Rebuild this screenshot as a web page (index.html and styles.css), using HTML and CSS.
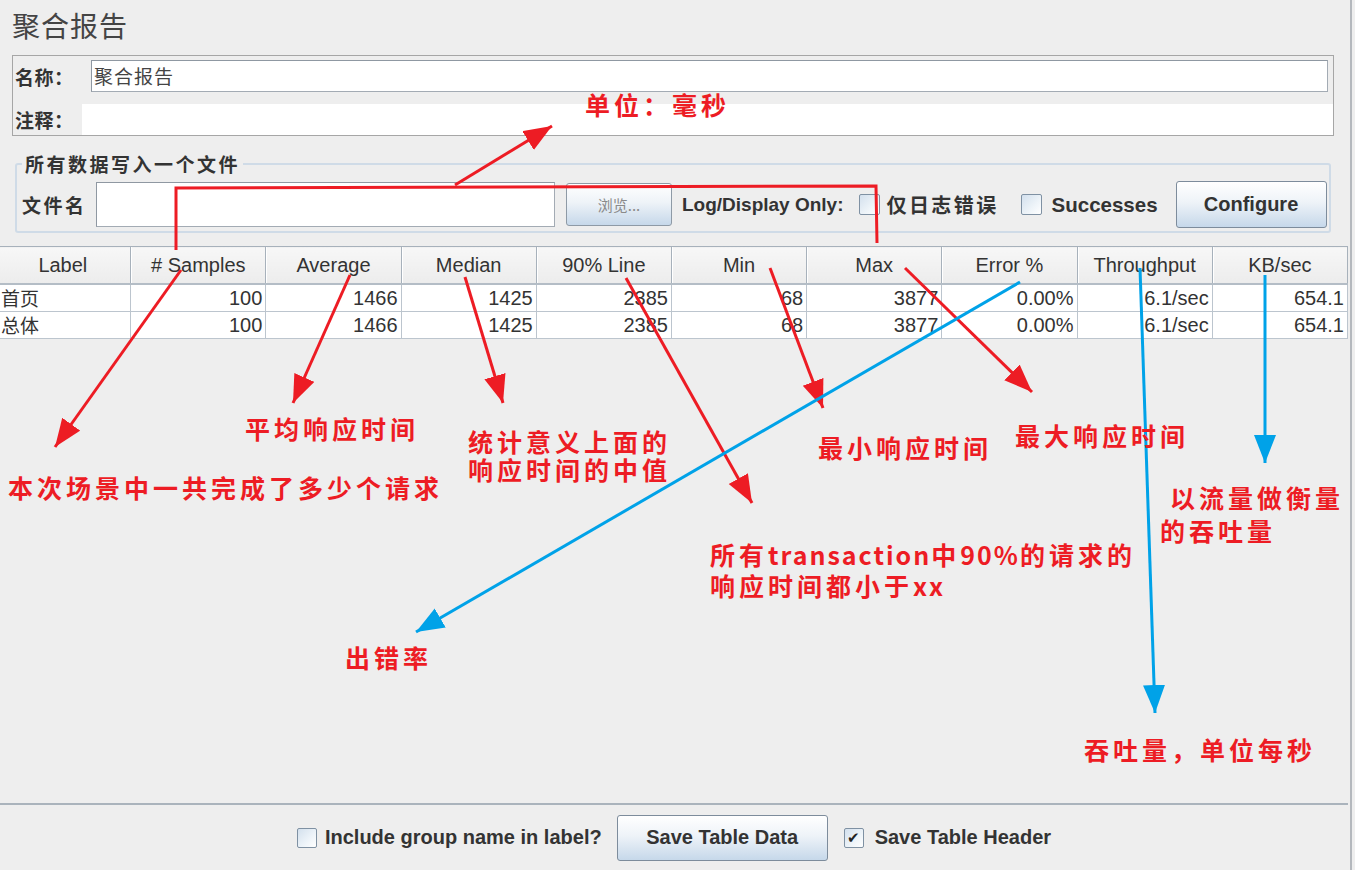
FILE: index.html
```html
<!DOCTYPE html>
<html lang="zh-CN">
<head>
<meta charset="utf-8">
<title>聚合报告</title>
<link rel="stylesheet" href="styles.css">
</head>
<body>
<div class="window">
  <h1 class="title">聚合报告</h1>

  <div class="namebox">
    <div class="name-row">
      <span class="lbl name-lbl">名称：</span>
      <div class="name-input">聚合报告</div>
    </div>
    <div class="comment-row">
      <span class="lbl comment-lbl">注释：</span>
      <div class="comment-area"></div>
    </div>
  </div>

  <fieldset class="group">
    <legend class="group-title">所有数据写入一个文件</legend>
    <div class="file-row">
      <span class="file-lbl">文件名</span>
      <div class="file-input"></div>
      <button class="btn browse">浏览...</button>
      <span class="opt log-opt">Log/Display Only:</span>
      <span class="cb cb-err"></span>
      <span class="opt cjk-opt">仅日志错误</span>
      <span class="cb cb-succ"></span>
      <span class="opt succ-opt">Successes</span>
      <button class="btn configure">Configure</button>
    </div>
  </fieldset>

  <div class="results">
    <table class="grid">
      <thead>
        <tr>
          <th>Label</th><th># Samples</th><th>Average</th><th>Median</th><th>90% Line</th>
          <th>Min</th><th>Max</th><th>Error %</th><th>Throughput</th><th>KB/sec</th>
        </tr>
      </thead>
      <tbody>
        <tr>
          <td class="lab">首页</td><td>100</td><td>1466</td><td>1425</td><td>2385</td>
          <td>68</td><td>3877</td><td>0.00%</td><td>6.1/sec</td><td>654.1</td>
        </tr>
        <tr>
          <td class="lab">总体</td><td>100</td><td>1466</td><td>1425</td><td>2385</td>
          <td>68</td><td>3877</td><td>0.00%</td><td>6.1/sec</td><td>654.1</td>
        </tr>
      </tbody>
    </table>
  </div>

  <div class="bottom">
    <span class="cb cb-small"></span>
    <span class="opt group-opt">Include group name in label?</span>
    <button class="btn save-data">Save Table Data</button>
    <span class="cb cb-small checked">&#10004;</span>
    <span class="opt header-opt">Save Table Header</span>
  </div>
</div>

<svg class="overlay" width="1355" height="870" viewBox="0 0 1355 870" xmlns="http://www.w3.org/2000/svg">
  <defs>
    <marker id="hr" markerUnits="userSpaceOnUse" markerWidth="30" markerHeight="24" refX="28" refY="11" orient="auto">
      <path d="M0,0 L28,11 L0,22 Z" fill="#ed1c24"/>
    </marker>
    <marker id="hb" markerUnits="userSpaceOnUse" markerWidth="30" markerHeight="24" refX="28" refY="11" orient="auto">
      <path d="M0,0 L28,11 L0,22 Z" fill="#00a2e8"/>
    </marker>
  </defs>
  <g fill="none" stroke="#ed1c24" stroke-width="3">
    <polyline points="176,250 176,188 876,186 877,243"/>
    <line x1="455" y1="185" x2="552" y2="126" marker-end="url(#hr)"/>
    <line x1="181" y1="270" x2="55" y2="447" marker-end="url(#hr)"/>
    <line x1="350" y1="275" x2="293" y2="403" marker-end="url(#hr)"/>
    <line x1="465" y1="277" x2="503" y2="403" marker-end="url(#hr)"/>
    <line x1="626" y1="278" x2="752" y2="503" marker-end="url(#hr)"/>
    <line x1="770" y1="268" x2="823" y2="408" marker-end="url(#hr)"/>
    <line x1="905" y1="268" x2="1032" y2="392" marker-end="url(#hr)"/>
  </g>
  <g fill="none" stroke="#00a2e8" stroke-width="3">
    <line x1="1020" y1="282" x2="416" y2="632" marker-end="url(#hb)"/>
    <line x1="1140" y1="268" x2="1155" y2="713" marker-end="url(#hb)"/>
    <line x1="1265" y1="275" x2="1265" y2="463" marker-end="url(#hb)"/>
  </g>
</svg>

<div class="note n-unit">单位：毫秒</div>
<div class="note n-samples">本次场景中一共完成了多少个请求</div>
<div class="note n-avg">平均响应时间</div>
<div class="note n-median">统计意义上面的<br>响应时间的中值</div>
<div class="note n-min">最小响应时间</div>
<div class="note n-max">最大响应时间</div>
<div class="note n-90">所有<span class="lat">transaction</span>中<span class="lat">90%</span>的请求的<br>响应时间都小于<span class="lat">xx</span></div>
<div class="note n-kb"><span class="indent">以流量做衡量</span><br>的吞吐量</div>
<div class="note n-err">出错率</div>
<div class="note n-tp">吞吐量，单位每秒</div>
</body>
</html>
```

FILE: styles.css
```css
html, body {
  margin: 0;
  padding: 0;
}

body {
  width: 1355px;
  height: 870px;
  overflow: hidden;
  position: relative;
  background: #eeeeee;
  color: #333333;
  font-family: "Liberation Sans", "Noto Sans CJK SC", sans-serif;
}

.window {
  width: 1352px;
  height: 870px;
  box-sizing: border-box;
  border-right: 2px solid #b4b8bd;
  display: flex;
  flex-direction: column;
}

/* ---------- title ---------- */
.title {
  margin: 0 0 13px 0;
  padding: 9px 0 0 12px;
  font-family: "Noto Sans CJK SC", sans-serif;
  font-weight: 400;
  font-size: 28px;
  line-height: 33px;
  letter-spacing: 1px;
  color: #444444;
}

/* ---------- name / comment ---------- */
.namebox {
  margin-left: 12px;
  width: 1322px;
  height: 81px;
  box-sizing: border-box;
  border: 1px solid #a6a6a6;
  display: flex;
  flex-direction: column;
}

.lbl {
  font-family: "Noto Sans CJK SC", sans-serif;
  font-weight: 700;
  font-size: 19px;
  letter-spacing: 0.5px;
  color: #333333;
  padding-left: 2px;
  box-sizing: border-box;
  white-space: nowrap;
}

.name-row {
  height: 48px;
  display: flex;
  align-items: flex-start;
}

.name-lbl {
  width: 78px;
  line-height: 32px;
  margin-top: 5px;
}

.name-input {
  margin-top: 4px;
  width: 1237px;
  height: 32px;
  box-sizing: border-box;
  border: 1px solid #a3abb4;
  border-top-color: #8f98a2;
  border-left-color: #8f98a2;
  background: #ffffff;
  padding-left: 2px;
  font-family: "Noto Sans CJK SC", sans-serif;
  font-size: 19px;
  line-height: 29px;
  letter-spacing: 1px;
  color: #444444;
}

.comment-row {
  height: 31px;
  display: flex;
  align-items: center;
}

.comment-lbl {
  width: 69px;
  line-height: 31px;
}

.comment-area {
  flex: 1;
  align-self: stretch;
  background: #ffffff;
}

/* ---------- file group ---------- */
.group {
  margin: 17px 0 0 15px;
  width: 1316px;
  box-sizing: border-box;
  border: 2px solid #cfdbe7;
  border-radius: 3px;
  padding: 6px 2px 3px 5px;
  min-inline-size: 0;
}

.group-title {
  padding: 0 3px;
  font-family: "Noto Sans CJK SC", sans-serif;
  font-weight: 700;
  font-size: 19px;
  line-height: 22px;
  letter-spacing: 2.5px;
  color: #333333;
}

.file-row {
  height: 47px;
  display: flex;
  align-items: center;
}

.file-lbl {
  width: 74px;
  font-family: "Noto Sans CJK SC", sans-serif;
  font-weight: 700;
  font-size: 19px;
  letter-spacing: 2.5px;
  color: #333333;
}

.file-input {
  width: 459px;
  height: 45px;
  box-sizing: border-box;
  border: 1px solid #a3abb4;
  border-top-color: #8f98a2;
  border-left-color: #8f98a2;
  background: #ffffff;
}

.btn {
  box-sizing: border-box;
  border: 1px solid #7d8c9c;
  border-radius: 3px;
  background: linear-gradient(to bottom, #ffffff 0%, #eef3f8 45%, #c6d8ea 100%);
  font-family: "Liberation Sans", "Noto Sans CJK SC", sans-serif;
  font-weight: 700;
  font-size: 20px;
  color: #333333;
  padding: 0;
}

.browse {
  margin-left: 11px;
  width: 106px;
  height: 43px;
  font-family: "Noto Sans CJK SC", sans-serif;
  font-weight: 400;
  font-size: 15px;
  color: #8a8a8a;
  border-color: #8e9aa6;
}

.opt {
  font-family: "Liberation Sans", "Noto Sans CJK SC", sans-serif;
  font-weight: 700;
  font-size: 19px;
  color: #333333;
  white-space: nowrap;
}

.log-opt {
  margin-left: 10px;
}

.cjk-opt {
  margin-left: 7px;
  font-family: "Noto Sans CJK SC", sans-serif;
  font-size: 20px;
  letter-spacing: 2.4px;
}

.succ-opt {
  margin-left: 10px;
  font-size: 20.5px;
}

.cb {
  display: inline-flex;
  align-items: center;
  justify-content: center;
  width: 21px;
  height: 21px;
  box-sizing: border-box;
  border: 1px solid #7f91a3;
  border-radius: 2px;
  background: linear-gradient(135deg, #d3e0ed 0%, #eef4f9 60%, #ffffff 100%);
  color: #222222;
  font-size: 15px;
  line-height: 1;
}

.cb-small {
  width: 20px;
  height: 20px;
}

.cb-err {
  margin-left: 15px;
}

.cb-succ {
  margin-left: 22px;
}

.configure {
  margin-left: 18px;
  width: 151px;
  height: 47px;
}

/* ---------- results table ---------- */
.results {
  margin: 13px 0 0 -5px;
  width: 1353px;
  height: 559px;
  box-sizing: border-box;
  border-bottom: 2px solid #aab3bc;
  overflow: hidden;
}

.grid {
  width: 1353px;
  table-layout: fixed;
  border-collapse: collapse;
  font-family: "Liberation Sans", sans-serif;
  font-size: 20px;
  color: #333333;
}

.grid th {
  height: 36px;
  padding: 0;
  font-weight: 400;
  text-align: center;
  background: linear-gradient(to bottom, #f7f7f7 0%, #ececec 100%);
  border-top: 1px solid #a7b1bb;
  border-right: 1px solid #a7b1bb;
  border-bottom: 2px solid #b4bdc6;
  box-shadow: inset 1px 0 0 #ffffff;
  white-space: nowrap;
  overflow: hidden;
}

.grid td {
  height: 26px;
  padding: 0 3px 0 0;
  text-align: right;
  background: #ffffff;
  border: 1px solid #bcc5ce;
  white-space: nowrap;
  overflow: hidden;
  line-height: 24px;
}

.grid td.lab {
  text-align: left;
  padding-left: 5px;
  font-family: "Noto Sans CJK SC", sans-serif;
  font-size: 19px;
}

/* ---------- bottom bar ---------- */
.bottom {
  flex: 1;
  display: flex;
  align-items: center;
  justify-content: center;
  padding-right: 2px;
}

.group-opt {
  margin-left: 8px;
  font-size: 20px;
}

.save-data {
  margin-left: 15px;
  width: 211px;
  height: 46px;
}

.checked {
  margin-left: 16px;
}

.header-opt {
  margin-left: 11px;
  font-size: 20px;
}

/* ---------- annotation overlay ---------- */
.overlay {
  position: absolute;
  left: 0;
  top: 0;
  pointer-events: none;
}

.note {
  position: absolute;
  font-family: "Noto Sans CJK SC", sans-serif;
  font-weight: 700;
  font-size: 25px;
  line-height: 30px;
  letter-spacing: 4px;
  color: #ed1c24;
  white-space: nowrap;
}

.note .lat {
  letter-spacing: 2px;
}

.n-unit { left: 585px; top: 89px; }
.n-samples { left: 8px; top: 472px; }
.n-avg { left: 245px; top: 413px; }
.n-median { left: 468px; top: 427px; line-height: 28px; }
.n-min { left: 818px; top: 432px; }
.n-max { left: 1015px; top: 420px; }
.n-90 { left: 710px; top: 539px; line-height: 31px; }
.n-kb { left: 1160px; top: 481px; line-height: 33px; }
.n-kb .indent { padding-left: 10px; }
.n-err { left: 345px; top: 642px; }
.n-tp { left: 1084px; top: 734px; }
```
